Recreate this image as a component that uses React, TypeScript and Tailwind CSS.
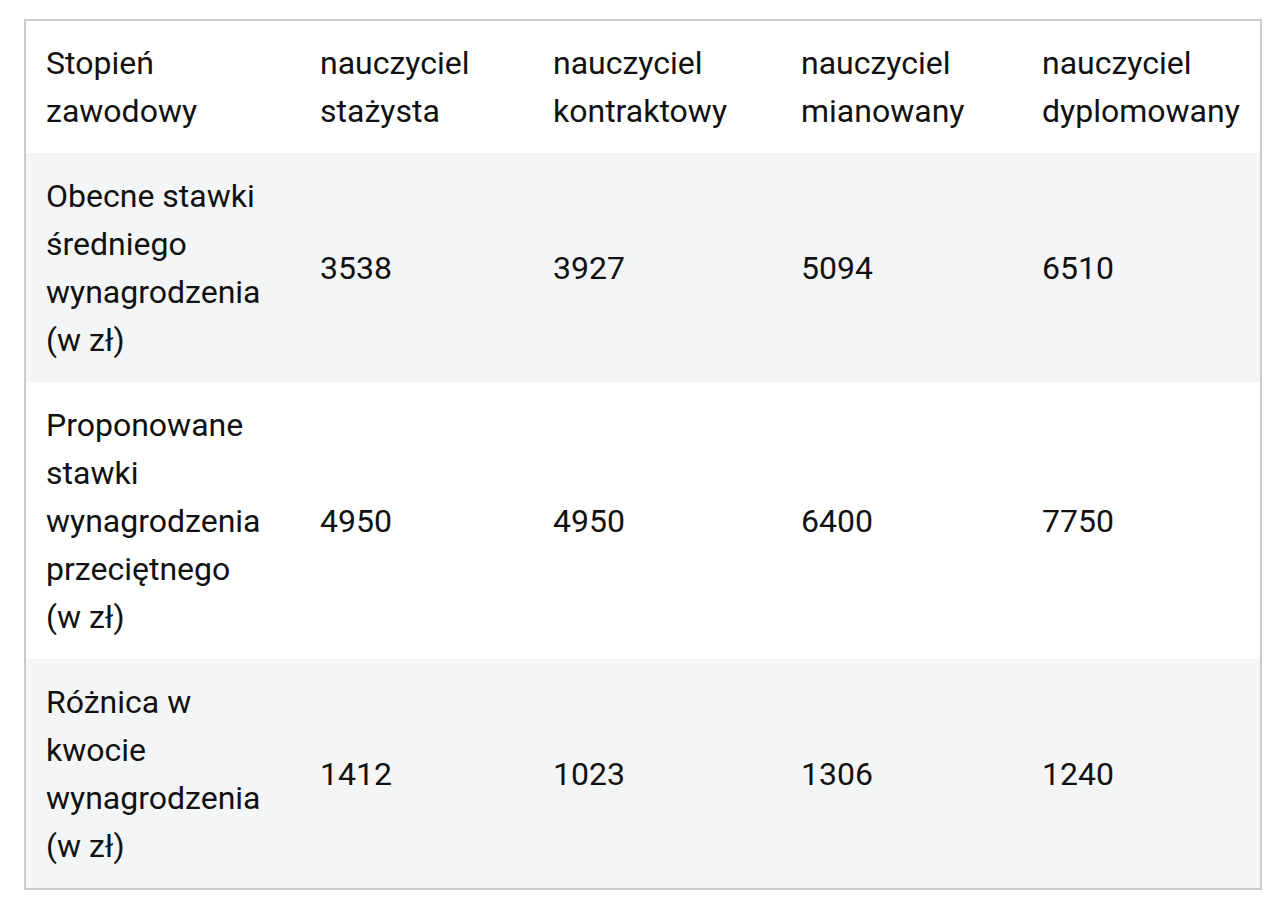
import React from "react";

const rows: { label: string[]; values: string[]; bg: string }[] = [
  { label: ["Obecne stawki", "średniego", "wynagrodzenia", "(w zł)"], values: ["3538", "3927", "5094", "6510"], bg: "bg-[#f4f5f6]" },
  { label: ["Proponowane", "stawki", "wynagrodzenia", "przeciętnego", "(w zł)"], values: ["4950", "4950", "6400", "7750"], bg: "bg-white" },
  { label: ["Różnica w", "kwocie", "wynagrodzenia", "(w zł)"], values: ["1412", "1023", "1306", "1240"], bg: "bg-[#f4f5f6]" },
];

const header = [
  ["Stopień", "zawodowy"],
  ["nauczyciel", "stażysta"],
  ["nauczyciel", "kontraktowy"],
  ["nauczyciel", "mianowany"],
  ["nauczyciel", "dyplomowany"],
];

function Lines({ lines }: { lines: string[] }) {
  return (
    <div className="flex flex-col">
      {lines.map((l, i) => (
        <span key={i} className="whitespace-nowrap">{l}</span>
      ))}
    </div>
  );
}

export default function App() {
  const grid = "grid grid-cols-[273px_233px_248px_241px_239px] items-center";
  return (
    <div className="min-h-[912px] w-[1280px] bg-white pt-[19px] pl-[24px]" style={{ fontFamily: "Roboto, 'Liberation Sans', sans-serif" }}>
      <div className="w-[1238px] border-2 border-[#cccccc] text-[32px] leading-[48px] text-[#111111]">
        <div className={`${grid} bg-white py-[18px]`}>
          {header.map((h, i) => (
            <div key={i} className={i === 0 ? "pl-[20px]" : "pl-[21px]"}>
              <Lines lines={h} />
            </div>
          ))}
        </div>
        {rows.map((r, ri) => (
          <div key={ri} className={`${grid} ${r.bg} py-[18.5px]`}>
            <div className="pl-[20px]">
              <Lines lines={r.label} />
            </div>
            {r.values.map((v, vi) => (
              <div key={vi} className="pl-[21px]">{v}</div>
            ))}
          </div>
        ))}
      </div>
    </div>
  );
}
